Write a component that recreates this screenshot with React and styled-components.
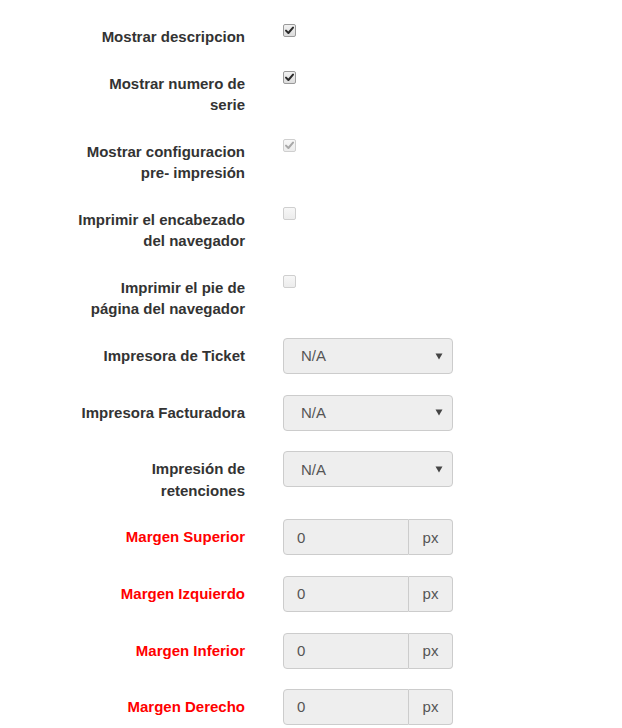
import React from "react";
import styled, { createGlobalStyle } from "styled-components";

const Global = createGlobalStyle`
  html, body { margin: 0; padding: 0; background: #fff; overflow: hidden; }
  body { font-family: "Liberation Sans", Arial, Helvetica, sans-serif; font-size: 15px; line-height: 1.42857; color: #333; }
  * { box-sizing: border-box; }
`;

const Form = styled.form`
  display: flex;
  flex-direction: column;
  gap: 17px;
  padding: 19px 0 0 74px;
`;

const Row = styled.div`
  display: grid;
  grid-template-columns: 171px 170px;
  column-gap: 38px;
  align-items: start;
`;

const Label = styled.label`
  display: block;
  text-align: right;
  font-weight: bold;
  padding: 7px 0 1.25px;
  color: ${(p) => (p.$required ? "#ff0000" : "#333")};
`;

const CheckCell = styled.div`
  padding-top: 5px;
`;

const Box = styled.span`
  display: block;
  width: 13px;
  height: 13px;
  border-radius: 2px;
  border: 1px solid ${(p) => (p.$checked && !p.$disabled ? "#9a9a9a" : "#cfcfcf")};
  background: ${(p) =>
    p.$checked && !p.$disabled
      ? "linear-gradient(#f2f2f2, #dcdcdc)"
      : "linear-gradient(#f7f7f7, #ececec)"};
  svg { display: block; }
`;

const ControlCell = styled.div`
  padding-bottom: 3.6px;
`;

const SelectBox = styled.div`
  display: flex;
  align-items: center;
  justify-content: space-between;
  height: 36px;
  padding: 0 9px 0 17px;
  background: #eee;
  border: 1px solid #ccc;
  border-radius: 4px;
  color: #555;
  font-size: 15px;
`;

const InputGroup = styled.div`
  display: flex;
  height: 36px;
`;

const InputBox = styled.div`
  flex: 1;
  display: flex;
  align-items: center;
  padding-left: 13px;
  background: #eee;
  border: 1px solid #ccc;
  border-radius: 4px 0 0 4px;
  color: #555;
`;

const Addon = styled.div`
  width: 44px;
  display: flex;
  align-items: center;
  justify-content: center;
  background: #eee;
  border: 1px solid #ccc;
  border-left: 0;
  border-radius: 0 4px 4px 0;
  color: #555;
`;

const Check = ({ checked, disabled }) => (
  <Box $checked={checked} $disabled={disabled}>
    {checked && (
      <svg width="11" height="11" viewBox="0 0 11 11">
        <path
          d="M2 5.6 L4.4 8 L9 2.6"
          fill="none"
          stroke={disabled ? "#a8a8a8" : "#2b2b2b"}
          strokeWidth="2"
          strokeLinecap="round"
          strokeLinejoin="round"
        />
      </svg>
    )}
  </Box>
);

const Select = ({ value }) => (
  <SelectBox>
    <span>{value}</span>
    <svg width="8" height="7" viewBox="0 0 8 7">
      <polygon points="0.5,0.5 7.5,0.5 4,6.5" fill="#444" />
    </svg>
  </SelectBox>
);

const checks = [
  { label: "Mostrar descripcion", checked: true },
  { label: "Mostrar numero de serie", checked: true },
  { label: "Mostrar configuracion pre- impresión", checked: true, disabled: true },
  { label: "Imprimir el encabezado del navegador", checked: false },
  { label: "Imprimir el pie de página del navegador", checked: false },
];

const selects = ["Impresora de Ticket", "Impresora Facturadora", "Impresión de retenciones"];

const margins = ["Margen Superior", "Margen Izquierdo", "Margen Inferior", "Margen Derecho"];

export default function App() {
  return (
    <>
      <Global />
      <Form>
        {checks.map((c) => (
          <Row key={c.label}>
            <Label>{c.label}</Label>
            <CheckCell>
              <Check checked={c.checked} disabled={c.disabled} />
            </CheckCell>
          </Row>
        ))}
        {selects.map((s) => (
          <Row key={s}>
            <Label>{s}</Label>
            <ControlCell>
              <Select value="N/A" />
            </ControlCell>
          </Row>
        ))}
        {margins.map((m) => (
          <Row key={m}>
            <Label $required>{m}</Label>
            <ControlCell>
              <InputGroup>
                <InputBox>0</InputBox>
                <Addon>px</Addon>
              </InputGroup>
            </ControlCell>
          </Row>
        ))}
      </Form>
    </>
  );
}
